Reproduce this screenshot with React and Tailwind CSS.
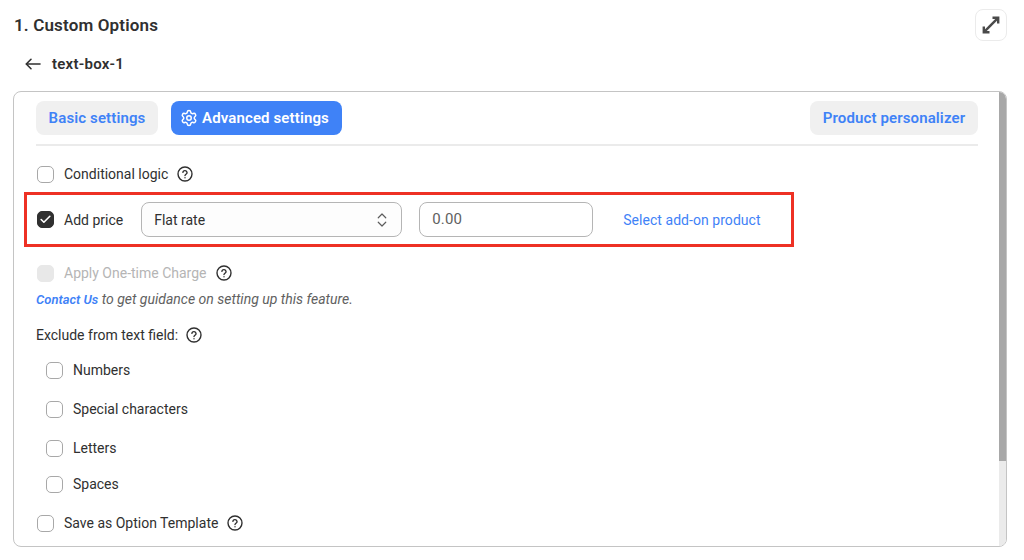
import React from 'react';
import { ChevronsUpDown, Check, Settings } from 'lucide-react';

const Help = () => (
  <svg width="16" height="16" viewBox="0 0 24 24" fill="none" stroke="#303030" strokeWidth="2.1" strokeLinecap="round" strokeLinejoin="round" className="shrink-0">
    <circle cx="12" cy="12" r="10.5" />
    <path d="M8.8 9.4a3.2 3.2 0 0 1 6.3.6c0 2-3.1 2.6-3.1 4.2" />
    <path d="M12 17.6h.01" />
  </svg>
);

const Expand = () => (
  <svg width="20" height="20" viewBox="0 0 20 20" fill="none" stroke="#4a4a4a" strokeWidth="2.4">
    <path d="M11.5 2.8h5.7v5.7" />
    <path d="M2.8 11.5v5.7h5.7" />
    <path d="M16.6 3.4 3.4 16.6" />
  </svg>
);

const Back = () => (
  <svg width="16" height="12" viewBox="0 0 16 12" fill="none" stroke="#303030" strokeWidth="1.6" strokeLinecap="round" strokeLinejoin="round">
    <path d="M15 6H1.5" />
    <path d="M6 1.3 1.3 6 6 10.7" />
  </svg>
);

const Box = ({ checked, disabled }) => (
  <span
    className={
      'flex h-[17px] w-[17px] shrink-0 items-center justify-center rounded-[5px] border ' +
      (checked
        ? 'border-[#303030] bg-[#303030]'
        : disabled
          ? 'border-[#e8e8e8] bg-[#e8e8e8]'
          : 'border-[#a8a8a8] bg-white')
    }
  >
    {checked && <Check size={13} strokeWidth={3} className="text-white" />}
  </span>
);

const Option = ({ label, help, className = '' }) => (
  <div className={'flex h-[18px] items-center gap-[10px] text-sm text-[#303030] ' + className}>
    <Box />
    <span>{label}</span>
    {help && <span className="-ml-px"><Help /></span>}
  </div>
);

const App = () => {
  return (
    <div className="h-[560px] w-[1024px] overflow-hidden bg-white pl-[13px] pr-[17px] pt-[9px] font-['Roboto',sans-serif] text-[#303030]">
      <header className="flex h-8 items-center justify-between">
        <h1 className="pl-px pt-[2px] text-[17px] font-semibold tracking-[0.15px]">1. Custom Options</h1>
        <button className="flex h-8 w-8 items-center justify-center rounded-lg border border-[#ebebeb] bg-white">
          <Expand />
        </button>
      </header>

      <div className="mt-[13px] flex h-[20px] items-center pl-[12px]">
        <Back />
        <span className="ml-[11px] text-[15px] font-semibold tracking-[0.25px]">text-box-1</span>
      </div>

      <section className="mt-[17px] flex h-[456px] overflow-hidden rounded-lg border border-[#c4c4c4] bg-white">
        <div className="min-w-0 flex-1 pl-[22px] pr-[21px] pt-[9px]">
          <div className="flex items-center justify-between border-b-2 border-[#ebebeb] pb-[9px]">
            <div className="flex gap-[13px]">
              <button className="h-[34px] w-[122px] rounded-lg bg-[#f0f0f0] text-[15px] font-semibold tracking-[0.12px] text-[#3f82f7]">Basic settings</button>
              <button className="flex h-[34px] w-[171px] items-center justify-center gap-[4px] rounded-lg bg-[#3f82f7] pr-[4px] text-[15px] font-semibold tracking-[0.12px] text-white">
                <Settings size={18} strokeWidth={2} />
                Advanced settings
              </button>
            </div>
            <button className="h-[34px] w-[168px] rounded-lg bg-[#f0f0f0] text-[15px] font-semibold tracking-[0.12px] text-[#3f82f7]">Product personalizer</button>
          </div>

          <Option label="Conditional logic" help className="mt-[19px] pl-px" />

          <div className="-ml-3 mt-[9px] flex h-[55px] w-[770px] items-center border-[3px] border-[#ee3124] pl-[10px]">
            <Box checked />
            <span className="ml-[10px] text-sm">Add price</span>
            <div className="ml-[18px] flex h-[35px] w-[261px] items-center justify-between rounded-lg border border-[#b5b5b5] bg-[#fdfdfd] pl-[12px] pr-[10px] text-sm">
              Flat rate
              <ChevronsUpDown size={18} strokeWidth={1.6} className="text-[#5c5c5c]" />
            </div>
            <div className="ml-[17px] flex h-[35px] w-[174px] items-center rounded-lg border border-[#b5b5b5] pl-[12px] text-[15px] tracking-[0.2px] text-[#616161]">0.00</div>
            <a className="ml-[30px] text-sm tracking-[0.05px] text-[#3f82f7]">Select add-on product</a>
          </div>

          <div className="mt-[17px] flex h-[18px] items-center gap-[10px] pl-px text-sm text-[#b5b5b5]">
            <Box disabled />
            <span>Apply One-time Charge</span>
            <span className="-ml-px"><Help /></span>
          </div>
          <p className="mt-[9px] text-sm italic leading-[16px] text-[#616161]">
            <a className="text-[13px] font-semibold text-[#3f82f7]">Contact Us</a> to get guidance on setting up this feature.
          </p>

          <div className="mt-[18px] flex h-[18px] items-center gap-[8px] text-sm">
            <span>Exclude from text field:</span>
            <Help />
          </div>

          <div className="pl-[10px]">
            <Option label="Numbers" className="mt-[17px]" />
            <Option label="Special characters" className="mt-[21px]" />
            <Option label="Letters" className="mt-[21px]" />
            <Option label="Spaces" className="mt-[18px]" />
          </div>

          <Option label="Save as Option Template" help className="mt-[21px] pl-px" />
        </div>

        <div className="w-[7px] shrink-0 bg-[#ebebeb]">
          <div className="h-[369px] bg-[#a8a8a8]" />
        </div>
      </section>
    </div>
  );
};

export default App;
